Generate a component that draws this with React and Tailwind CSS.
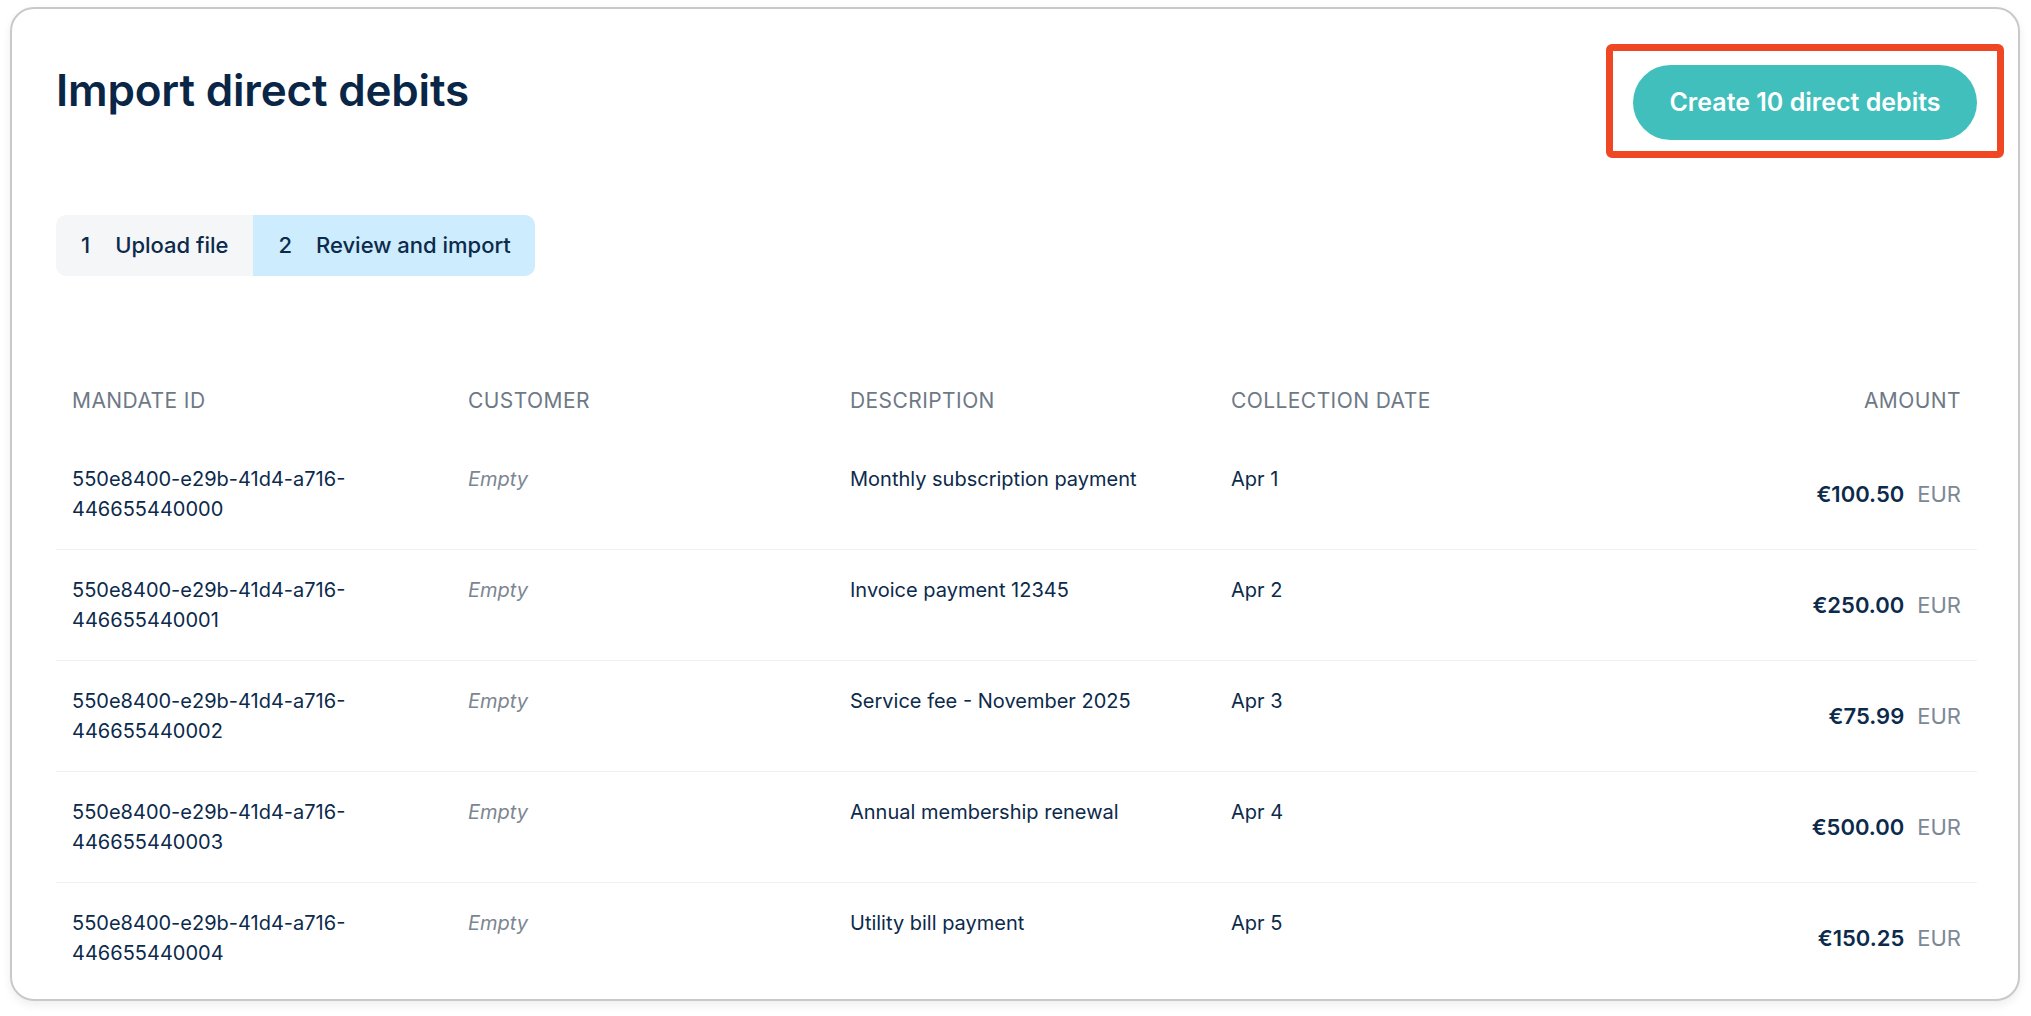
import React from 'react';

const ROWS = [
  { id: '550e8400-e29b-41d4-a716-446655440000', description: 'Monthly subscription payment', date: 'Apr 1', amount: '€100.50' },
  { id: '550e8400-e29b-41d4-a716-446655440001', description: 'Invoice payment 12345', date: 'Apr 2', amount: '€250.00' },
  { id: '550e8400-e29b-41d4-a716-446655440002', description: 'Service fee - November 2025', date: 'Apr 3', amount: '€75.99' },
  { id: '550e8400-e29b-41d4-a716-446655440003', description: 'Annual membership renewal', date: 'Apr 4', amount: '€500.00' },
  { id: '550e8400-e29b-41d4-a716-446655440004', description: 'Utility bill payment', date: 'Apr 5', amount: '€150.25' }
];

const GRID = 'grid grid-cols-[396px_382px_381px_381px_1fr]';

export default function App() {
  return (
    <div className="min-h-screen bg-white pl-[10px] pt-[7px] font-['Inter','Noto_Sans',sans-serif] text-[#0c2a4b]">
      <div className="w-[2010px] rounded-[24px] border-2 border-[#c9c9c9] bg-white pl-[44px] pr-[41px] pt-[56px] pb-[6px] shadow-[0_4px_10px_rgba(0,0,0,0.07)]">
        <div className="flex items-start justify-between">
          <h1 className="text-[44px] leading-[50px] font-semibold tracking-[-0.004em] text-[#0a2647]">
            Import direct debits
          </h1>
          <div className="relative">
            <button className="flex h-[75px] w-[344px] items-center justify-center rounded-full bg-[#41bfbc] text-[25px] font-semibold text-white">
              Create 10 direct debits
            </button>
            <div className="pointer-events-none absolute -left-[27px] -right-[27px] -top-[21px] -bottom-[18px] rounded-[6px] border-[7px] border-[#ef4623]" />
          </div>
        </div>

        <div className="mt-[75px] flex w-fit overflow-hidden rounded-[10px] text-[22px] font-medium">
          <div className="flex h-[61px] items-center gap-[25px] bg-[#f5f6f8] px-[25px]">
            <span>1</span>
            <span>Upload file</span>
          </div>
          <div className="flex h-[61px] items-center gap-[24px] bg-[#cdecfd] pl-[25px] pr-[24px]">
            <span>2</span>
            <span>Review and import</span>
          </div>
        </div>

        <div className="mt-[87px] text-[20px] leading-[30px]">
          <div className={`${GRID} py-[23px] text-[21px] uppercase tracking-[0.02em] text-[#6e7986]`}>
            <div className="px-4">Mandate ID</div>
            <div className="px-4">Customer</div>
            <div className="px-4">Description</div>
            <div className="px-4">Collection date</div>
            <div className="px-4 text-right">Amount</div>
          </div>
          {ROWS.map((row, i) => (
            <div key={row.id} className={`${GRID} py-[25px] ${i > 0 ? 'border-t border-[#eef0f3]' : ''}`}>
              <div className="px-4 break-words">{row.id}</div>
              <div className="px-4 italic text-[#7c8692]">Empty</div>
              <div className="px-4">{row.description}</div>
              <div className="px-4">{row.date}</div>
              <div className="flex items-center justify-end gap-[13px] px-4 text-[22px]">
                <span className="font-semibold">{row.amount}</span>
                <span className="text-[#7d8895]">EUR</span>
              </div>
            </div>
          ))}
        </div>
      </div>
    </div>
  );
}
